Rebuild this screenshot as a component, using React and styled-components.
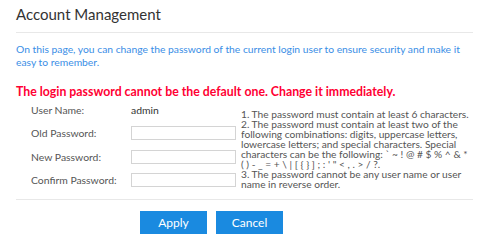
import styled, { createGlobalStyle } from 'styled-components';

const GlobalStyle = createGlobalStyle`
    html, body {
        margin: 0;
        padding: 0;
        background: #fff;
    }
    body {
        font-family: Lato, 'Liberation Sans', sans-serif;
    }
`

const rows = [
    { label: "Old Password:", name: "oldPassword" },
    { label: "New Password:", name: "newPassword" },
    { label: "Confirm Password:", name: "confirmPassword" },
];

const App = () => {
  return (
    <>
    <GlobalStyle />
    <Page>
        <Title>Account Management</Title>
        <Intro>
            On this page, you can change the password of the current login user to ensure security and make it easy to remember.
        </Intro>
        <Warning>The login password cannot be the default one. Change it immediately.</Warning>
        <FormBody>
            <Fields>
                <Row>
                    <Label>User Name:</Label>
                    <Value>admin</Value>
                </Row>
                {rows.map((row) => (
                    <Row key={row.name}>
                        <Label>{row.label}</Label>
                        <Input type="password" name={row.name} />
                    </Row>
                ))}
            </Fields>
            <Rules>
                1. The password must contain at least 6 characters.<br />
                2. The password must contain at least two of the following combinations: digits, uppercase letters, lowercase letters; and special characters. Special characters can be the following: ` ~ ! @ # $ % ^ &amp; * ( ) - _ = + \ | [ {'{'} {'}'} ] ; : ' " &lt; , . &gt; / ?.<br />
                3. The password cannot be any user name or user name in reverse order.
            </Rules>
        </FormBody>
        <Footer>
            <Button type="button">Apply</Button>
            <Button type="button">Cancel</Button>
        </Footer>
    </Page>
    </>
  )
}

const Page = styled.div`
    width: 457px;
    padding: 5px 0 0 16px;
`

const Title = styled.h1`
    margin: 0;
    padding-bottom: 9px;
    border-bottom: 1px solid #e8e8e8;
    font-size: 15px;
    font-weight: 400;
    line-height: 18px;
    color: #333;
`

const Intro = styled.p`
    margin: 10px 0 0;
    width: 452px;
    font-size: 10.3px;
    line-height: 13px;
    color: #3a8ee6;
`

const Warning = styled.p`
    margin: 15px 0 0;
    font-size: 12.3px;
    font-weight: 700;
    line-height: 16px;
    color: #ff0033;
    white-space: nowrap;
`

const FormBody = styled.div`
    display: flex;
    align-items: flex-start;
    margin-top: 3px;
    padding-bottom: 10px;
    border-bottom: 1px solid #e8e8e8;
`

const Fields = styled.div`
    display: flex;
    flex-direction: column;
    gap: 9.3px;
    padding-left: 15px;
    flex-shrink: 0;
`

const Row = styled.div`
    display: flex;
    align-items: center;
    height: 14px;
`

const Label = styled.span`
    width: 100px;
    font-size: 10.4px;
    color: #555;
    white-space: nowrap;
`

const Value = styled.span`
    font-size: 10.4px;
    color: #333;
`

const Input = styled.input`
    box-sizing: border-box;
    width: 105px;
    height: 14px;
    margin: 0;
    padding: 0 3px;
    border: 1px solid #d4d4d4;
    outline: none;
`

const Rules = styled.div`
    flex-shrink: 0;
    width: 231px;
    margin: 6px 0 0 5px;
    font-size: 10.2px;
    line-height: 10px;
    color: #555;
`

const Footer = styled.div`
    display: flex;
    gap: 9px;
    padding: 11px 0 0 124px;
`

const Button = styled.button`
    width: 67px;
    height: 23px;
    padding: 0;
    border: none;
    background: #1a8ae0;
    color: #fff;
    font-family: inherit;
    font-size: 12px;
    cursor: pointer;
`

export default App;
